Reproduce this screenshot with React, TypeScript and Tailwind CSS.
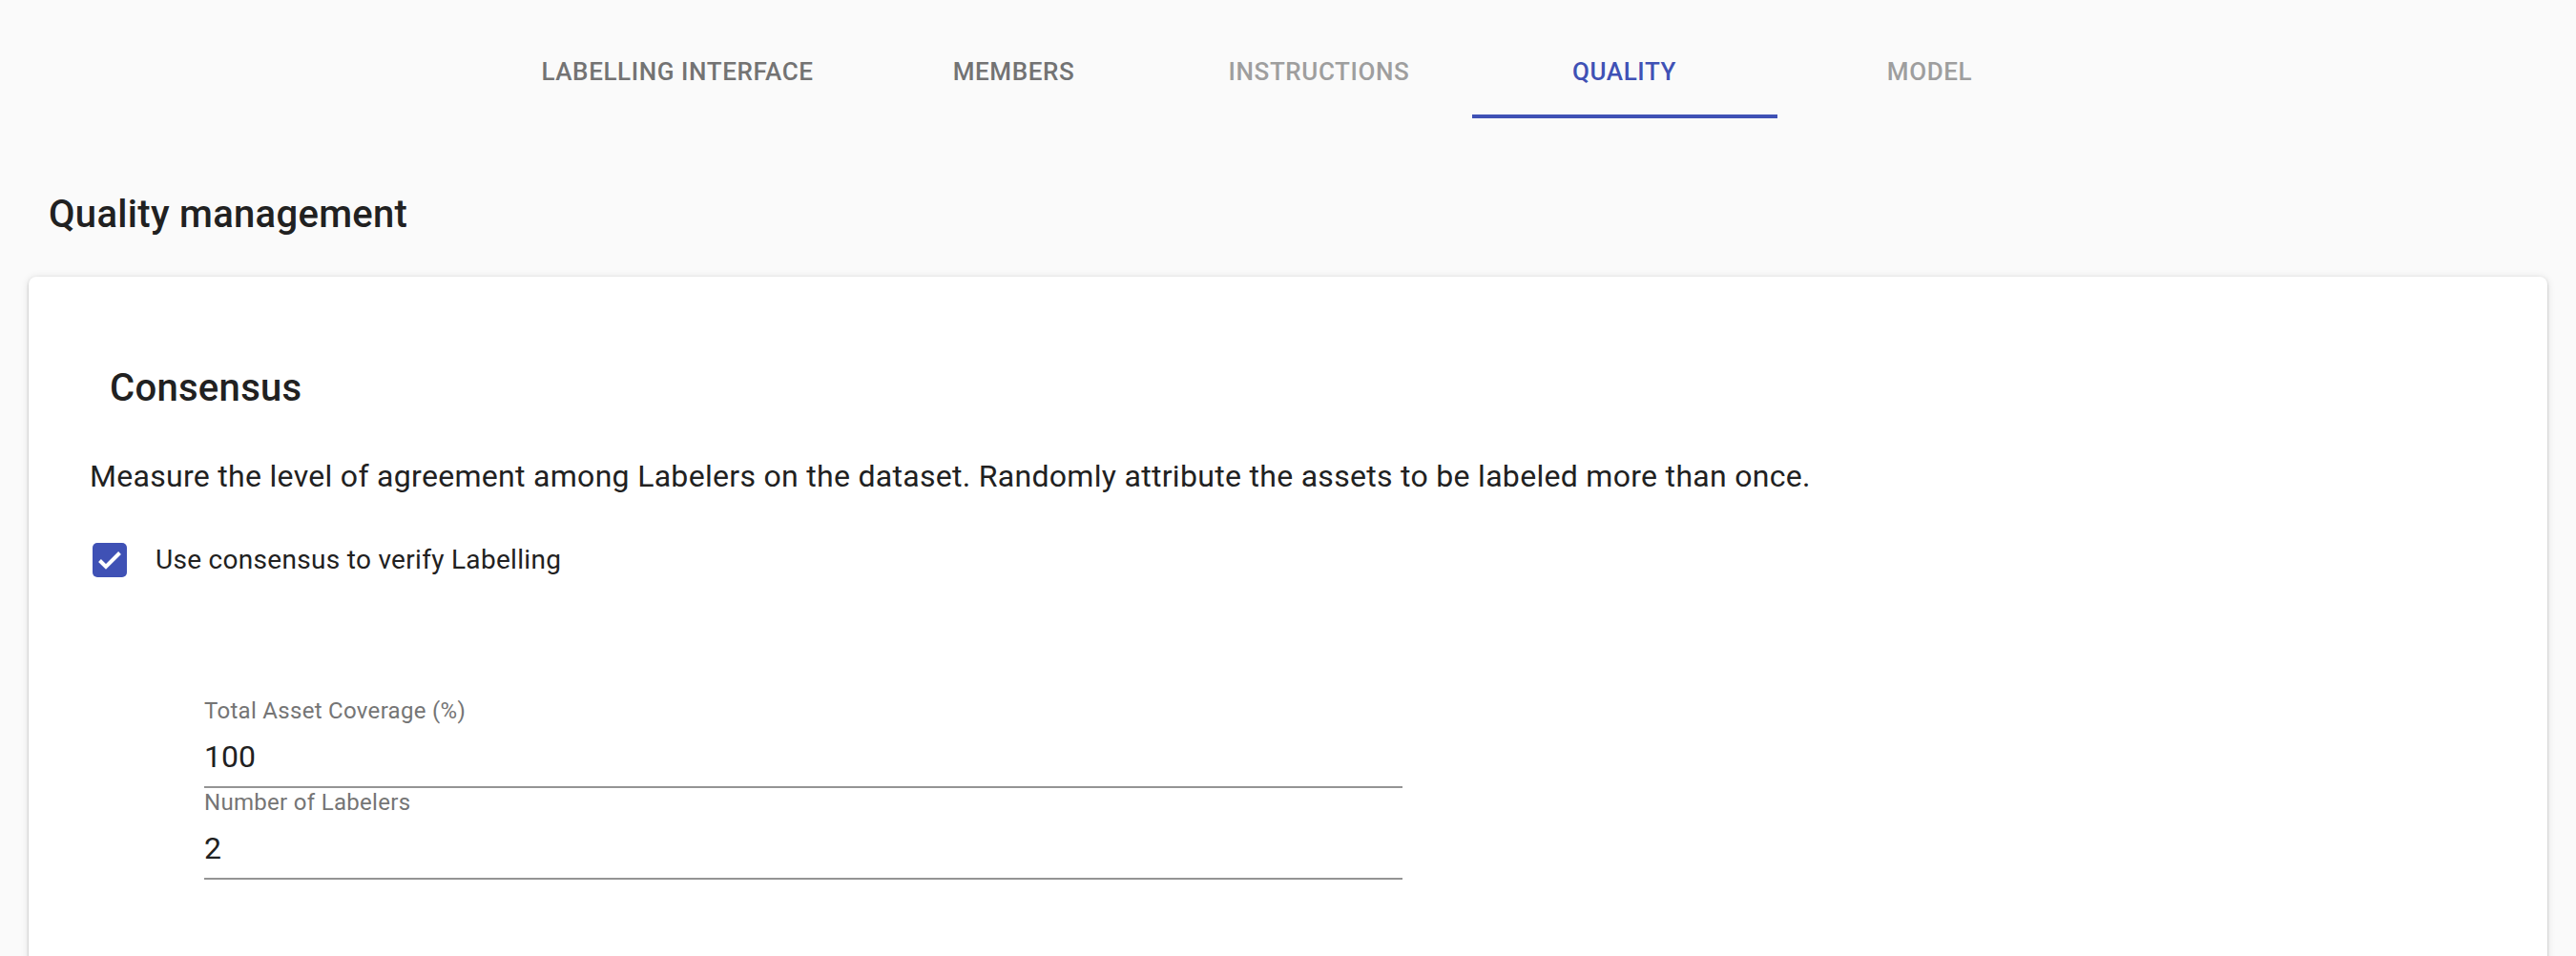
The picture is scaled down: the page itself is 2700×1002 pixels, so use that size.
import React from "react";

const tabs = [
  { label: "LABELLING INTERFACE", width: "w-[385px]", tone: "text-[#737373]" },
  { label: "MEMBERS", width: "w-[320px]", tone: "text-[#737373]" },
  { label: "INSTRUCTIONS", width: "w-[320px]", tone: "text-[#9e9e9e]" },
  { label: "QUALITY", width: "w-[320px]", tone: "text-[#3f51b5]", active: true },
  { label: "MODEL", width: "w-[320px]", tone: "text-[#9e9e9e]" },
];

interface FieldProps {
  label: string;
  value: string;
  className?: string;
}

const Field: React.FC<FieldProps> = ({ label, value, className }) => (
  <div className={`w-[1256px] ${className ?? ""}`}>
    <div className="text-[24px] leading-[26px] tracking-[0.3px] text-[#757575]">{label}</div>
    <div className="mt-[17px] border-b-2 border-[#949494] pb-[13px] text-[32px] leading-[36px] text-[#212121]">
      {value}
    </div>
  </div>
);

export default function App() {
  return (
    <div
      className="h-[1002px] overflow-hidden bg-[#fafafa]"
      style={{ fontFamily: "Roboto, 'Liberation Sans', sans-serif" }}
    >
      {/* Tabs */}
      <div className="flex justify-center">
        {tabs.map((t) => (
          <div
            key={t.label}
            className={`${t.width} h-[124px] box-border pt-[60px] text-center border-b-4 ${
              t.active ? "border-[#3f51b5]" : "border-transparent"
            }`}
          >
            <span className={`text-[26px] leading-[30px] font-medium tracking-[0.6px] ${t.tone}`}>
              {t.label}
            </span>
          </div>
        ))}
      </div>

      <h1 className="mt-[78px] pl-[51px] text-[40px] leading-[46px] font-medium tracking-[0.3px] text-[#212121]">
        Quality management
      </h1>

      {/* Card */}
      <div className="mx-[30px] mt-[42px] h-[900px] rounded-[8px] bg-white shadow-[0_2px_3px_-1px_rgba(0,0,0,0.2),0_1px_3px_0_rgba(0,0,0,0.14),0_1px_8px_0_rgba(0,0,0,0.12)]">
        <h2 className="pl-[85px] pt-[94px] text-[40px] leading-[46px] font-medium tracking-[0.3px] text-[#212121]">
          Consensus
        </h2>

        <p className="mt-[51px] pl-[64px] text-[32px] leading-[36px] tracking-[0.3px] text-[#212121]">
          Measure the level of agreement among Labelers on the dataset. Randomly attribute the assets to be labeled more than once.
        </p>

        <label className="mt-[52px] ml-[67px] flex items-center gap-[30px]">
          <svg width="36" height="36" viewBox="0 0 36 36">
            <rect width="36" height="36" rx="5" fill="#3f51b5" />
            <path d="M7.5 18.5l6.5 6.5 14.5-14.5" fill="none" stroke="white" strokeWidth="4" />
          </svg>
          <span className="text-[28px] leading-[32px] tracking-[0.3px] text-[#212121]">
            Use consensus to verify Labelling
          </span>
        </label>

        <div className="ml-[184px] mt-[127px]">
          <Field label="Total Asset Coverage (%)" value="100" />
          <Field label="Number of Labelers" value="2" className="mt-[2px]" />
        </div>
      </div>
    </div>
  );
}
